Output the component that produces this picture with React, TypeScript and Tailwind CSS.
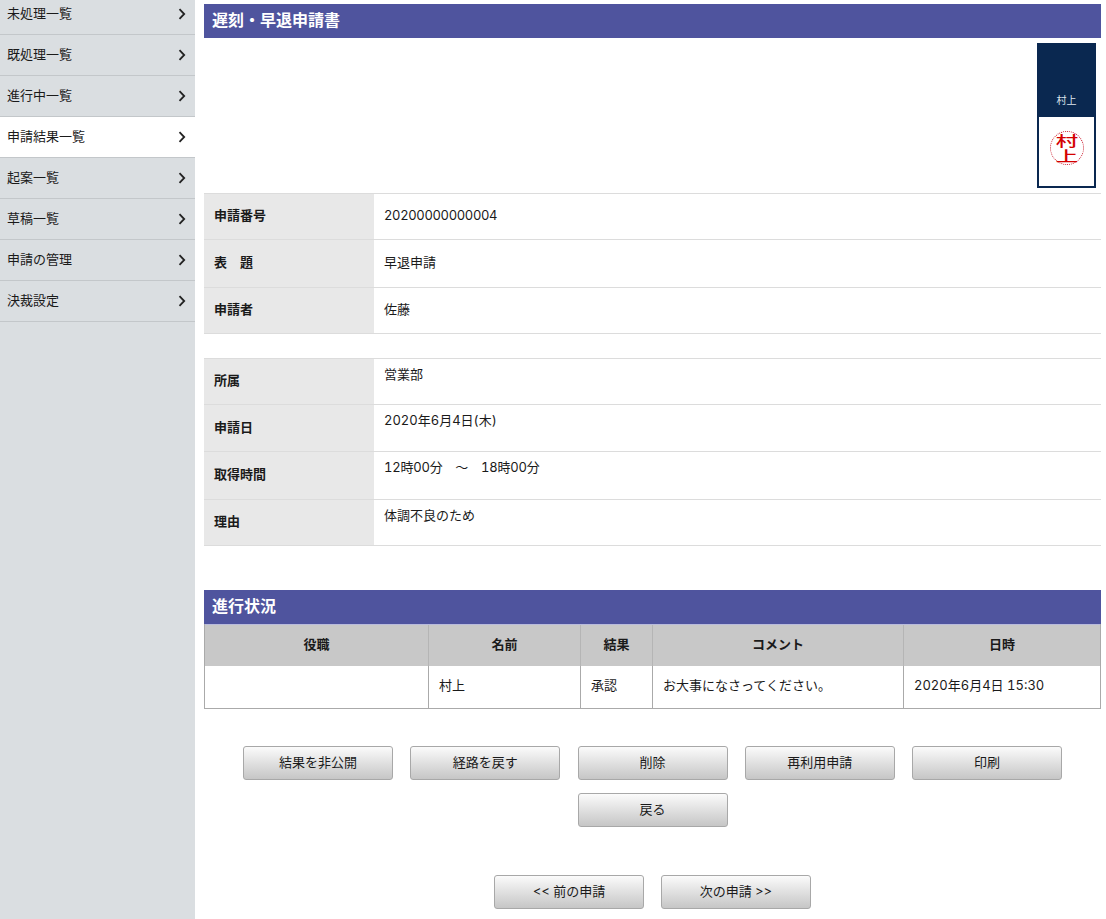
const font = '[font-family:"Inter","Noto_Sans_CJK_JP","Liberation_Sans",sans-serif]'

const menu = ['未処理一覧', '既処理一覧', '進行中一覧', '申請結果一覧', '起案一覧', '草稿一覧', '申請の管理', '決裁設定']

function Chevron() {
  return (
    <svg width="8" height="12" viewBox="0 0 8 12" fill="none" stroke="#222" strokeWidth="1.8" className="ml-auto translate-x-[1px] translate-y-[1px]" aria-hidden>
      <path d="M1.5 1.2 6.2 6l-4.7 4.8" />
    </svg>
  )
}

function Sidebar() {
  return (
    <div className="w-[195px] shrink-0 bg-[#dadee1]">
      {menu.map((label, i) => (
        <div
          key={label}
          className={`flex items-center justify-between border-b border-[#c3c7ca] pl-[7px] pr-[10px] text-[13px] leading-none text-[#1a1a1a] ${
            i === 0 ? 'h-[35px] pb-[8px]' : 'h-[41px] pb-[2px]'
          } ${i === 3 ? 'bg-white' : ''}`}
        >
          <span>{label}</span>
          <Chevron />
        </div>
      ))}
    </div>
  )
}

function Heading({ children }: { children: React.ReactNode }) {
  return (
    <div className="flex h-[34px] items-center bg-[#4f549e] px-2 pb-[3px] text-[16px] font-bold text-white">
      {children}
    </div>
  )
}

function Stamp() {
  return (
    <div className="flex h-[145px] w-[59px] flex-col border-2 border-t-0 border-[#0a2850]">
      <div className="flex h-[74px] items-end justify-center bg-[#0a2850] pb-[12px] text-[10px] leading-none text-[#dfe6ee]">
        村上
      </div>
      <div className="flex flex-1 items-center justify-center bg-white pb-[8px]">
        <div className="flex h-[34px] w-[34px] flex-col items-center justify-center rounded-full border border-dotted border-[#cc2233] text-[14px] font-medium leading-[15px] text-[#d40000]">
          <span className="h-[15px] scale-x-[1.6]">村</span>
          <span className="h-[15px] scale-x-[1.6]">上</span>
        </div>
      </div>
    </div>
  )
}

function Row({ label, value, h, top, tight }: { label: string; value: string; h: string; top?: boolean; tight?: string }) {
  return (
    <div className={`flex border-b border-[#dcdcdc] ${h}`}>
      <div className="flex w-[170px] shrink-0 items-center bg-[#e8e8e8] pb-[1px] pl-[10px] text-[13px] font-bold text-[#1a1a1a]">
        {label}
      </div>
      <div className={`flex flex-1 pl-[10px] text-[13px] text-[#1a1a1a] ${top ? 'items-start pt-[6px]' : 'items-center pb-[2px]'}`}>
        <span className={`whitespace-pre ${tight ?? ''}`}>{value}</span>
      </div>
    </div>
  )
}

const columns = 'grid-cols-[223px_152px_72px_251px_197px]'

function StatusTable() {
  const head = ['役職', '名前', '結果', 'コメント', '日時']
  const body = ['', '村上', '承認', 'お大事になさってください。', '2020年6月4日 15:30']
  return (
    <div className="border-x border-b border-[#aaa]">
      <div className={`grid h-[42px] ${columns} border-t border-[#b9bbdc] bg-[#c8c8c8]`}>
        {head.map((t, i) => (
          <div key={t} className={`flex items-center justify-center pb-[1px] text-[13px] font-bold text-[#1a1a1a] ${i > 0 ? 'border-l border-[#b5b5b5]' : ''}`}>
            {t}
          </div>
        ))}
      </div>
      <div className={`grid h-[42px] ${columns}`}>
        {body.map((t, i) => (
          <div key={i} className={`flex items-center pb-[2px] pl-[10px] text-[13px] text-[#1a1a1a] ${i > 0 ? 'border-l border-[#aaa]' : ''}`}>
            {t}
          </div>
        ))}
      </div>
    </div>
  )
}

function Btn({ children }: { children: React.ReactNode }) {
  return (
    <button
      type="button"
      className="h-[34px] w-[150px] rounded-[3px] border border-[#a8a8a8] bg-gradient-to-b from-[#fbfbfb] to-[#c6c6c6] pb-[1px] text-[13px] text-[#1a1a1a]"
    >
      {children}
    </button>
  )
}

export default function App() {
  return (
    <div className={`flex h-[919px] overflow-hidden bg-white tabular-nums ${font}`}>
      <Sidebar />
      <div className="ml-[9px] w-[897px] pt-1">
        <Heading>遅刻・早退申請書</Heading>
        <div className="flex h-[156px] justify-end border-b border-[#dcdcdc] pr-[5px] pt-[5px]">
          <Stamp />
        </div>
        <Row label="申請番号" value="20200000000004" h="h-[46px]" tight="tracking-[-0.35px]" />
        <Row label="表　題" value="早退申請" h="h-[48px]" />
        <Row label="申請者" value="佐藤" h="h-[46px]" />

        <div className="mt-[24px] border-t border-[#dcdcdc]">
          <Row label="所属" value="営業部" h="h-[46px]" top />
          <Row label="申請日" value="2020年6月4日(木)" h="h-[47px]" top />
          <Row label="取得時間" value="12時00分　～　18時00分" h="h-[48px]" top tight="tracking-[-0.2px]" />
          <Row label="理由" value="体調不良のため" h="h-[46px]" top />
        </div>

        <div className="mt-[44px]">
          <Heading>進行状況</Heading>
          <StatusTable />
        </div>

        <div className="mt-[37px] flex flex-wrap justify-center gap-x-[17.25px] gap-y-[13px]">
          <Btn>結果を非公開</Btn>
          <Btn>経路を戻す</Btn>
          <Btn>削除</Btn>
          <Btn>再利用申請</Btn>
          <Btn>印刷</Btn>
          <Btn>戻る</Btn>
        </div>

        <div className="mt-[48px] flex justify-center gap-x-[17px]">
          <Btn>{'<<  前の申請'}</Btn>
          <Btn>{'次の申請  >>'}</Btn>
        </div>
      </div>
    </div>
  )
}
